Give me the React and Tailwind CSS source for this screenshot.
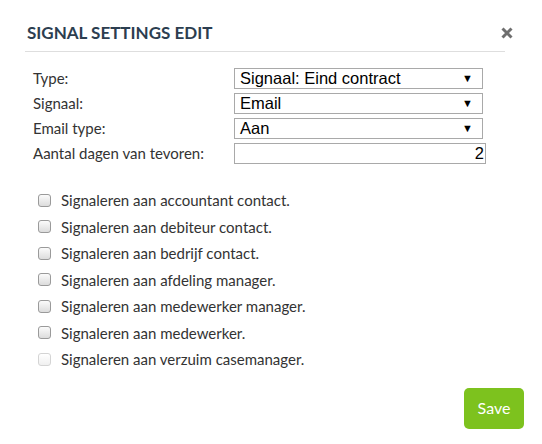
import React from "react";

const selects = [
  { label: "Type:", value: "Signaal: Eind contract" },
  { label: "Signaal:", value: "Email" },
  { label: "Email type:", value: "Aan" },
];

const checks = [
  "Signaleren aan accountant contact.",
  "Signaleren aan debiteur contact.",
  "Signaleren aan bedrijf contact.",
  "Signaleren aan afdeling manager.",
  "Signaleren aan medewerker manager.",
  "Signaleren aan medewerker.",
  "Signaleren aan verzuim casemanager.",
];

function Box({ disabled }) {
  return (
    <div
      className={
        disabled
          ? "w-[13px] h-[13px] rounded-[3px] border border-[#d4d4d4] bg-gradient-to-b from-white to-[#f0f0f0]"
          : "w-[13px] h-[13px] rounded-[3px] border border-[#9a9a9a] bg-gradient-to-b from-[#fbfbfb] to-[#dcdcdc]"
      }
    />
  );
}

export default function App() {
  return (
    <div className="w-[542px] h-[444px] bg-white text-[#333] font-['Lato','Noto_Sans',sans-serif] flex flex-col">
      <div className="flex items-center justify-between pt-[21px] pl-[27px] pr-[29px] h-[44px]">
        <div className="text-[17px] leading-[22px] font-bold text-[#2c3e50]">
          SIGNAL SETTINGS EDIT
        </div>
        <svg width="12" height="12" viewBox="0 0 12 12">
          <path d="M1.5 1.5 L10.5 10.5 M10.5 1.5 L1.5 10.5" stroke="#6f6f6f" strokeWidth="3" strokeLinecap="butt" />
        </svg>
      </div>
      <div className="mt-[7px] ml-[25px] w-[480px] h-px bg-[#dedede]" />
      <div className="mt-[16px] ml-[33px] flex flex-col gap-[4px]">
        {selects.map((s) => (
          <div key={s.label} className="flex items-center h-[21px]">
            <div className="w-[201px] text-[15px] leading-[21px]">{s.label}</div>
            <div className="w-[249px] h-[21px] border border-[#a9a9a9] flex items-center justify-between pl-[5px] pr-[9px] font-['Liberation_Sans',Arial,sans-serif] text-[16.5px] text-black leading-[19px]">
              <span>{s.value}</span>
              <span className="text-[11px] leading-none">▼</span>
            </div>
          </div>
        ))}
        <div className="flex items-center h-[21px]">
          <div className="w-[201px] text-[15px] leading-[21px]">Aantal dagen van tevoren:</div>
          <div className="w-[252px] h-[21px] border border-[#a9a9a9] flex items-center justify-end pr-[1px] font-['Liberation_Sans',Arial,sans-serif] text-[16.5px] text-black leading-[19px]">
            2
          </div>
        </div>
      </div>
      <div className="mt-[23px] ml-[38px] flex flex-col">
        {checks.map((c, i) => (
          <div key={c} className="flex items-center h-[26.5px]">
            <Box disabled={i === checks.length - 1} />
            <span className="ml-[10px] text-[15px] leading-[20px]">{c}</span>
          </div>
        ))}
      </div>
      <div className="flex justify-end pr-[18px] mt-[15px]">
        <button className="w-[60px] h-[41px] rounded-[5px] bg-[#7dc21e] text-white text-[16px] font-['Lato',sans-serif]">
          Save
        </button>
      </div>
    </div>
  );
}
